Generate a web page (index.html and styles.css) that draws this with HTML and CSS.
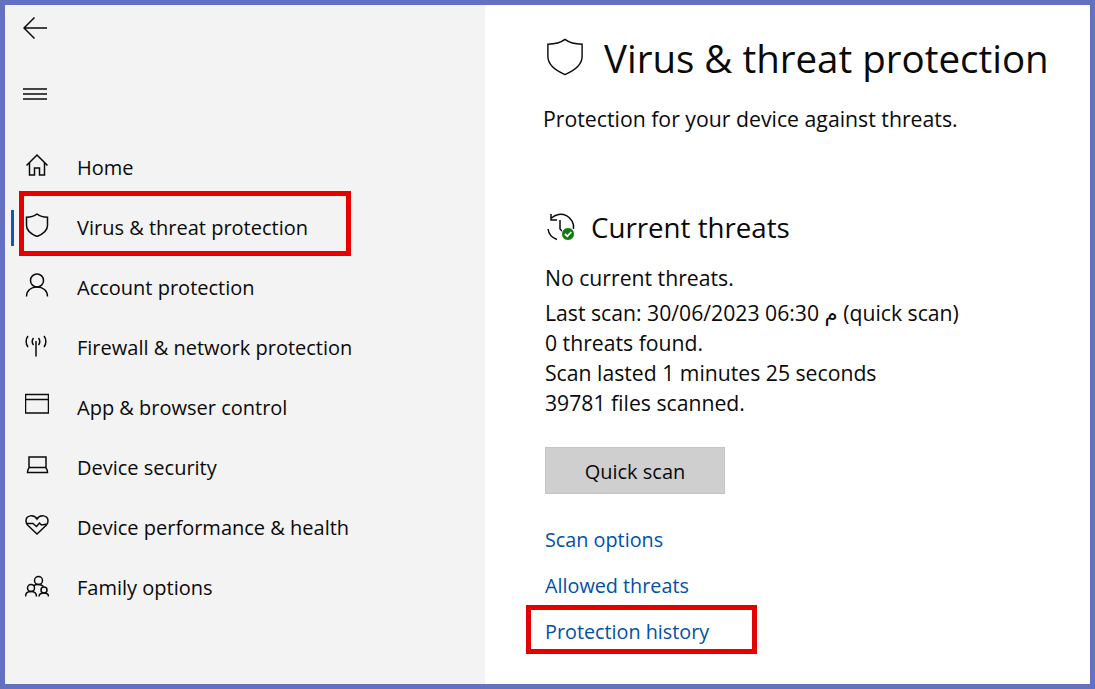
FILE: index.html
```html
<!DOCTYPE html>
<html lang="en">
<head>
    <meta charset="UTF-8">
    <meta name="viewport" content="width=device-width, initial-scale=1.0">
    <title>Virus &amp; threat protection</title>
    <link rel="stylesheet" href="styles.css">
</head>
<body>
    <div class="window">
        <!-- Sidebar -->
        <aside class="sidebar">
            <button class="tool back">
                <svg width="26" height="24" viewBox="0 0 26 24"><path d="M24 12H1M11.500 1.500L1 12l10.500 10.500"/></svg>
            </button>
            <button class="tool menu">
                <svg width="26" height="12" viewBox="0 0 26 12"><path d="M0 1H24M0 6H24M0 11H24"/></svg>
            </button>
            <nav class="nav">
                <a class="nav-item">
                    <svg class="nav-icon" viewBox="0 0 24 24"><path d="M1.500 12.500L12 2l10.500 10.500M4.500 10v12h5v-7h5v7h5V10"/></svg>
                    <span>Home</span>
                </a>
                <a class="nav-item active">
                    <svg class="nav-icon" viewBox="0 0 24 24"><path d="M12 1c2.500 2 6 3.200 10.500 3.200v8.300c0 5-4.500 8.500-10.500 11-6-2.500-10.500-6-10.500-11V4.200C6 4.200 9.500 3 12 1z"/></svg>
                    <span>Virus &amp; threat protection</span>
                </a>
                <a class="nav-item">
                    <svg class="nav-icon" viewBox="0 0 24 24"><circle cx="12" cy="7.500" r="6.500"/><path d="M1.500 23.500c0-6 4.500-9.500 10.500-9.500s10.500 3.500 10.500 9.500"/></svg>
                    <span>Account protection</span>
                </a>
                <a class="nav-item">
                    <svg class="nav-icon" viewBox="0 0 24 24"><path d="M11 8v15.500M8.500 5C7 7 7 10 8.500 12M13.500 5C15 7 15 10 13.500 12M3 3C.5 6 .5 11 3 14M19 3C21.500 6 21.500 11 19 14"/></svg>
                    <span>Firewall &amp; network protection</span>
                </a>
                <a class="nav-item">
                    <svg class="nav-icon" viewBox="0 0 24 24"><path d="M.500 1.500h23v18.500H.500zM.500 6.500h23"/></svg>
                    <span>App &amp; browser control</span>
                </a>
                <a class="nav-item">
                    <svg class="nav-icon" viewBox="0 0 24 24"><path d="M4 14.500V4h17v10.500M2.500 19.500h20c0-2-1-5-2.500-5H5c-1.500 0-2.500 3-2.500 5z"/></svg>
                    <span>Device security</span>
                </a>
                <a class="nav-item">
                    <svg class="nav-icon" viewBox="0 0 24 24"><path d="M12 6C9 1 1 2 1 8c0 2 1 3.500 2 4.500L12 21l9-8.500c1-1 2-2.500 2-4.500 0-6-8-7-11-2zM1.500 10.500H8l3.500 3 3-3.500 2 2 6-1"/></svg>
                    <span>Device performance &amp; health</span>
                </a>
                <a class="nav-item">
                    <svg class="nav-icon" viewBox="0 0 24 24"><circle cx="13.500" cy="7.500" r="4"/><circle cx="6" cy="15" r="3.500"/><circle cx="19" cy="17" r="3"/><path d="M.500 23.500c0-3 2.200-5 5.500-5s5.500 2 5.500 5M14 23.500c0-2 2-3.500 5-3.500s4.500 1.500 4.500 3.500M8.500 12.500c1-.5 3-1 5-1s3.500.5 5 2"/></svg>
                    <span>Family options</span>
                </a>
            </nav>
        </aside>

        <!-- Main panel -->
        <main class="content">
            <header class="page-head">
                <svg class="head-icon" viewBox="0 0 40 40"><path d="M20 1.500c4.500 3.500 11 5 18 5v13c0 8-7.500 14.500-18 19-10.500-4.500-18-11-18-19v-13c7 0 13.500-1.500 18-5z"/></svg>
                <h1>Virus &amp; threat protection</h1>
            </header>
            <p class="subtitle">Protection for your device against threats.</p>

            <section class="threats">
                <div class="section-head">
                    <svg class="history-icon" viewBox="0 0 30 30">
                        <path d="M6.500 6A13 13 0 0 1 28.500 17M3 17A13 13 0 0 0 12 27.500M6 2v6h6M15 8v9l5 5"/>
                        <circle class="badge" cx="23" cy="22" r="6.500"/>
                        <path class="tick" d="M20 22l2.300 2.300 4-4.300"/>
                    </svg>
                    <h2>Current threats</h2>
                </div>
                <p class="status">No current threats.</p>
                <ul class="scan-info">
                    <li>Last scan: 30/06/2023 06:30 م (quick scan)</li>
                    <li>0 threats found.</li>
                    <li>Scan lasted 1 minutes 25 seconds</li>
                    <li>39781 files scanned.</li>
                </ul>
                <button class="scan-btn">Quick scan</button>
                <div class="links">
                    <a>Scan options</a>
                    <a>Allowed threats</a>
                    <a>Protection history</a>
                </div>
            </section>
        </main>

        <!-- Red annotation boxes -->
        <div class="callout callout-nav"></div>
        <div class="callout callout-history"></div>
    </div>
</body>
</html>
```

FILE: styles.css
```css
* {
    box-sizing: border-box;
}

body {
    margin: 0;
    font-family: "Open Sans", "DejaVu Sans", sans-serif;
    color: #0a0a0a;
    background-color: #fff;
}

svg path,
svg circle {
    fill: none;
    stroke: #0a0a0a;
    stroke-width: 1.5;
}

/* Window */
.window {
    position: relative;
    display: flex;
    width: 1095px;
    height: 689px;
    border: 5px solid #6470c0;
    background-color: #fff;
    overflow: hidden;
}

/* Sidebar */
.sidebar {
    display: flex;
    flex-direction: column;
    align-items: flex-start;
    width: 480px;
    padding-top: 11px;
    background-color: #f3f3f3;
}

.tool {
    display: block;
    padding: 0;
    margin-left: 18px;
    border: none;
    background: none;
    line-height: 0;
}

.menu {
    margin-top: 48px;
}

.nav {
    display: flex;
    flex-direction: column;
    width: 100%;
    margin-top: 37px;
}

.nav-item {
    position: relative;
    display: flex;
    align-items: center;
    height: 60px;
    padding-left: 20px;
    font-size: 20px;
}

.nav-item.active::before {
    content: "";
    position: absolute;
    left: 6px;
    top: 13px;
    width: 3px;
    height: 36px;
    background-color: #0a5bb0;
}

.nav-icon {
    width: 24px;
    height: 24px;
    margin-right: 28px;
    margin-top: -4px;
}

/* Main panel */
.content {
    flex: 1;
    padding: 29px 0 0 58px;
}

.page-head {
    display: flex;
    align-items: center;
    margin-left: 2px;
}

.head-icon {
    width: 38px;
    height: 38px;
    margin: -2px 20px 0 1px;
}

h1 {
    margin: 0;
    font-size: 38.500px;
    font-weight: 400;
    line-height: 48px;
    white-space: nowrap;
}

.subtitle {
    margin: 22px 0 0;
    font-size: 21.250px;
    line-height: 30px;
}

.threats {
    margin-top: 75px;
    margin-left: 2px;
}

.section-head {
    display: flex;
    align-items: center;
}

.history-icon {
    width: 30px;
    height: 30px;
    margin-right: 16px;
}

.history-icon .badge {
    fill: #107c10;
    stroke: #fff;
    stroke-width: 1;
}

.history-icon .tick {
    stroke: #fff;
    stroke-width: 1.800;
}

h2 {
    margin: 0;
    font-size: 27.700px;
    font-weight: 400;
    line-height: 36px;
}

.status {
    margin: 18px 0 0;
    font-size: 21.200px;
    line-height: 30px;
}

.scan-info {
    margin: 5px 0 0;
    padding: 0;
    list-style: none;
    font-size: 21.200px;
    line-height: 30px;
}

.scan-btn {
    display: block;
    width: 180px;
    height: 47px;
    margin-top: 29px;
    padding-top: 3px;
    border: 1px solid #c4c4c4;
    background-color: #cfcfcf;
    color: #0a0a0a;
    font-family: inherit;
    font-size: 20px;
}

.links {
    display: flex;
    flex-direction: column;
    gap: 16px;
    margin-top: 31px;
    font-size: 19.800px;
    line-height: 30px;
    color: #0050a8;
}

/* Annotation boxes */
.callout {
    position: absolute;
    border: 5px solid #e60000;
}

.callout-nav {
    left: 14px;
    top: 186px;
    width: 332px;
    height: 65px;
}

.callout-history {
    left: 521px;
    top: 600px;
    width: 231px;
    height: 49px;
}
```
